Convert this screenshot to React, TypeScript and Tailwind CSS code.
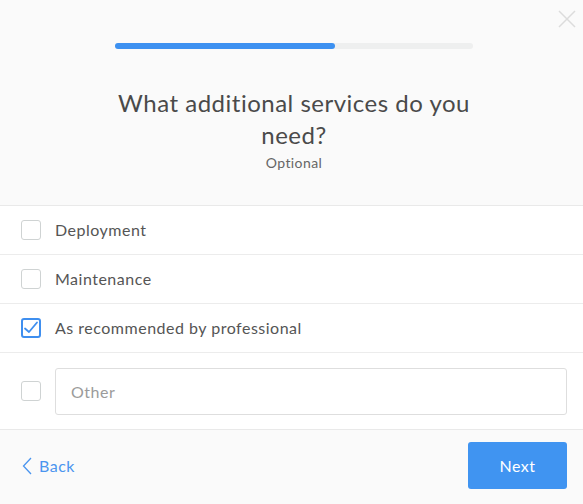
import { useState } from "react";

const options = ["Deployment", "Maintenance", "As recommended by professional"];

function Box({ checked }: { checked: boolean }) {
  return (
    <span
      className={
        checked
          ? "w-5 h-5 shrink-0 rounded-[3px] border-2 border-[#3f8fef] bg-white flex items-center justify-center"
          : "w-5 h-5 shrink-0 rounded-[3px] border border-[#cfd3d3] bg-white"
      }
    >
      {checked && (
        <svg width="16" height="14" viewBox="0 0 16 14" fill="none">
          <path d="M2 7.5 L6 11 L14 1.5" stroke="#3f8fef" strokeWidth="1.8" strokeLinecap="round" strokeLinejoin="round" />
        </svg>
      )}
    </span>
  );
}

export default function App() {
  const [picked, setPicked] = useState<string[]>(["As recommended by professional"]);
  const toggle = (o: string) =>
    setPicked((p) => (p.includes(o) ? p.filter((x) => x !== o) : [...p, o]));

  return (
    <div className="w-[583px] h-[504px] bg-white flex flex-col font-['Lato','Open_Sans',sans-serif] text-[#555]">
      <div className="relative bg-[#fafafa] h-[206px] border-b border-[#e9e9e9] flex flex-col items-center pt-[43px] pl-[5px]">
        <button className="absolute top-[9px] right-[6px] text-[#dcdcdc]">
          <svg width="20" height="20" viewBox="0 0 20 20" fill="none">
            <path d="M2 2 L18 18 M18 2 L2 18" stroke="currentColor" strokeWidth="1.5" />
          </svg>
        </button>
        <div className="w-[358px] h-[6px] rounded-full bg-[#eeefef]">
          <div className="w-[220px] h-full rounded-full bg-[#3d91f1]" />
        </div>
        <h1 className="mt-[38px] w-[380px] text-center text-[24px] leading-[32px] tracking-[0.5px] text-[#4a4a4a]">
          What additional services do you need?
        </h1>
        <p className="mt-[3px] text-[14px] leading-[18px] tracking-[0.4px] text-[#666]">Optional</p>
      </div>

      {options.map((o) => (
        <label
          key={o}
          onClick={() => toggle(o)}
          className="h-[49px] flex items-center gap-[14px] pl-[21px] border-b border-[#ececec] cursor-pointer"
        >
          <Box checked={picked.includes(o)} />
          <span className="text-[16px] tracking-[0.5px]">{o}</span>
        </label>
      ))}

      <div className="h-[77px] flex items-center gap-[14px] pl-[21px] pr-4 border-b border-[#e9e9e9]">
        <Box checked={false} />
        <input
          placeholder="Other"
          className="flex-1 h-[47px] rounded-[3px] border border-[#dedede] px-[15px] text-[16px] tracking-[0.5px] placeholder:text-[#9b9b9b] outline-none"
        />
      </div>

      <div className="flex-1 bg-[#fafafa] flex items-center justify-between pl-[22px] pr-4 pb-[3px]">
        <button className="flex items-center gap-[7px] text-[16px] tracking-[0.5px] text-[#4a95ef]">
          <svg width="10" height="18" viewBox="0 0 10 18" fill="none">
            <path d="M9 1 L1.5 9 L9 17" stroke="currentColor" strokeWidth="1.3" />
          </svg>
          Back
        </button>
        <button className="w-[99px] h-[47px] rounded-[3px] bg-[#4094f1] text-white text-[16px] tracking-[0.5px]">Next</button>
      </div>
    </div>
  );
}
